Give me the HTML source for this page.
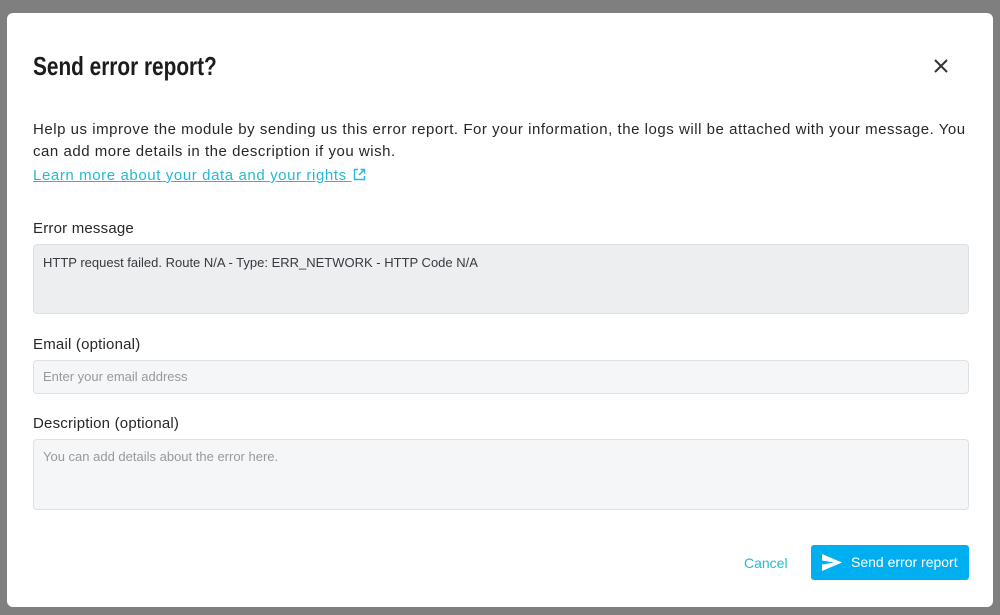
<!DOCTYPE html>
<html><head><style>
body{margin:0;width:1000px;height:615px;background:#7f7f7f;font-family:"Liberation Sans",sans-serif;position:relative;overflow:hidden}
.m{position:absolute;left:7px;top:13px;width:986px;height:594px;background:#fff;border-radius:6px}
.a{position:absolute;color:#25282b}
h1{position:absolute;left:26px;top:38px;margin:0;font-size:26px;font-weight:bold;color:#1c1c1c;transform:scaleX(0.8);transform-origin:left}
.p{left:26px;top:106px;font-size:15px;line-height:22px;width:945px;letter-spacing:0.53px}
.l{left:26px;top:154px;font-size:15px;color:#25b9d7;text-decoration:underline;letter-spacing:0.6px}
.lab{left:26px;font-size:15px;letter-spacing:0.2px}
.box{position:absolute;left:26px;width:936px;border:1px solid #dde1e5;border-radius:4px;background:#f4f6f8;font-size:13px;color:#999;padding:0 0 0 9px;box-sizing:border-box}
.cancel{left:737px;top:542px;font-size:14px;color:#25b9d7}
.btn{position:absolute;left:804px;top:532px;width:158px;height:35px;background:#00aff0;border-radius:3px;color:#fff;font-size:14px}
</style></head><body>
<div class="m">
<h1>Send error report?</h1>
<svg style="position:absolute;left:926px;top:45px" width="16" height="16" viewBox="0 0 16 16"><path d="M2 2L14 14M14 2L2 14" stroke="#333" stroke-width="2"/></svg>
<div class="a p">Help us improve the module by sending us this error report. For your information, the logs will be attached with your message. You can add more details in the description if you wish.</div>
<div class="a l">Learn more about your data and your rights <svg width="13" height="13" viewBox="0 0 13 13" style="vertical-align:-1px;margin-left:2px"><path d="M5 1.5H1.5V11.5H11.5V8M7.5 1.5H11.5V5.5M11.5 1.5L6 7" fill="none" stroke="#25b9d7" stroke-width="1.4"/></svg></div>
<div class="a lab" style="top:207px">Error message</div>
<div class="box" style="top:231px;height:70px;background:#eceeef;color:#363a41;padding-top:10px">HTTP request failed. Route N/A - Type: ERR_NETWORK - HTTP Code N/A</div>
<div class="a lab" style="top:323px">Email (optional)</div>
<div class="box" style="top:347px;height:34px;line-height:32px">Enter your email address</div>
<div class="a lab" style="top:402px">Description (optional)</div>
<div class="box" style="top:426px;height:71px;padding-top:9px">You can add details about the error here.</div>
<div class="a cancel">Cancel</div>
<div class="btn"><svg style="position:absolute;left:11px;top:9px" width="20" height="17" viewBox="0 0 20 17"><path d="M0 0L20 8.5L0 17L0 10.5L12 8.5L0 6.5Z" fill="#fff"/></svg><span style="position:absolute;left:40px;top:9px">Send error report</span></div>
</div>
</body></html>
